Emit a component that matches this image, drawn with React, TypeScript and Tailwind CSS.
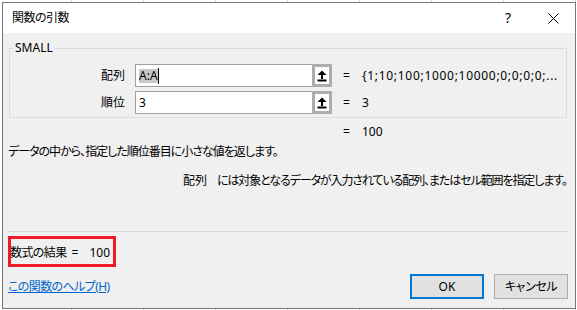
export default function App() {
  const Arrow = () => (
    <svg width="10" height="12" viewBox="0 0 10 12">
      <polygon points="5,0.5 9.5,5 6,5 6,9 4,9 4,5 0.5,5" fill="#000" />
      <rect x="0.5" y="9.5" width="9" height="2" fill="#000" />
    </svg>
  );
  const Input = ({ children }: { children: React.ReactNode }) => (
    <div className="ml-[10px] flex h-[23px] w-[197px]">
      <div className="flex flex-1 items-center border border-r-0 border-[#a0a0a0] bg-white pl-[3px]">{children}</div>
      <div className="flex h-full w-[20px] items-center justify-center border-[3px] border-[#adadad] bg-white">
        <Arrow />
      </div>
    </div>
  );
  return (
    <div className="h-[310px] w-[577px] overflow-hidden bg-white bg-[repeating-linear-gradient(90deg,transparent_0_71px,#d4d4d4_71px_72px)] pl-[2px] pt-[2px] font-['Noto_Sans','Noto_Sans_CJK_JP',sans-serif] text-[12px] leading-[16px] text-black [font-feature-settings:'palt']">
      <div className="flex h-[307px] w-[574px] flex-col border border-[#767676] bg-[#f0f0f0]">
        {/* title bar */}
        <div className="flex h-[30px] items-center bg-white pl-[9px]">
          <span className="text-[12px] tracking-[-0.5px]">関数の引数</span>
          <span className="ml-auto w-[20px] text-center text-[14px]">?</span>
          <span className="ml-[13px] flex w-[44px] items-center justify-center">
            <svg width="11" height="11" viewBox="0 0 11 11">
              <path d="M0.5 0.5 L10.5 10.5 M10.5 0.5 L0.5 10.5" stroke="#000" strokeWidth="1" />
            </svg>
          </span>
        </div>
        {/* body */}
        <div className="flex flex-1 flex-col">
          <fieldset className="ml-[6px] mt-[8px] w-[558px] border border-[#dcdcdc] pb-[3px] pt-[9px]">
            <legend className="ml-[3px] px-[2px] leading-[14px]">SMALL</legend>
            <div className="flex h-[23px] items-center">
              <span className="w-[115px] text-right">配列</span>
              <Input>
                <span className="bg-[#c8c8c8] leading-[14px]">A:A</span>
                <span className="h-[16px] w-px bg-black" />
              </Input>
              <span className="ml-[11px] w-[19px]">=</span>
              <span className="tracking-[0.7px]">{"{1;10;100;1000;10000;0;0;0;0;..."}</span>
            </div>
            <div className="mt-[4px] flex h-[23px] items-center">
              <span className="w-[115px] text-right">順位</span>
              <Input>
                <span>3</span>
              </Input>
              <span className="ml-[11px] w-[19px]">=</span>
              <span>3</span>
            </div>
          </fieldset>
          <div className="mt-[6px] flex pl-[340px]">
            <span className="w-[19px]">=</span>
            <span>100</span>
          </div>
          <div className="mt-[4px] whitespace-nowrap pl-[5px] tracking-[-1px]">データの中から、指定した順位番目に小さな値を返します。</div>
          <div className="mt-[13px] flex whitespace-nowrap pl-[180px]">
            <span className="w-[34px]">配列</span>
            <span className="tracking-[-1.1px]">には対象となるデータが入力されている配列、またはセル範囲を指定します。</span>
          </div>
          {/* bottom */}
          <div className="mt-auto ml-[5px] mr-[7px] h-px bg-[#dadada]" />
          <div className="relative mt-[13px] flex pl-[7px]">
            <span className="tracking-[-0.6px]">数式の結果</span>
            <span className="ml-[5px]">=</span>
            <span className="ml-[11px]">100</span>
            <div className="absolute left-[5px] top-[-9px] h-[31px] w-[108px] border-[3px] border-[#ed1c24]" />
          </div>
          <div className="mb-[9px] mt-[13px] flex h-[25px] items-center pl-[5px] pr-[7px]">
            <span className="text-[#0066cc] underline tracking-[-0.6px]">この関数のヘルプ(H)</span>
            <button className="ml-auto h-[25px] w-[74px] border-2 border-[#0078d7] bg-[#e1e1e1]">OK</button>
            <button className="ml-[10px] h-[25px] w-[74px] border border-[#adadad] bg-[#e1e1e1] tracking-[-0.4px]">キャンセル</button>
          </div>
        </div>
      </div>
    </div>
  );
}
